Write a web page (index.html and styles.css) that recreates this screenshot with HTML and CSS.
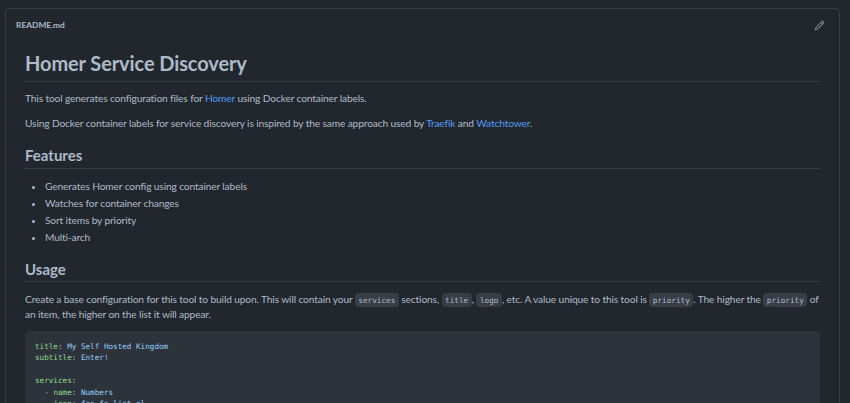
FILE: index.html
```html
<!DOCTYPE html>
<html lang="en">
<head>
<meta charset="utf-8">
<title>README.md</title>
<link rel="stylesheet" href="styles.css">
</head>
<body>
<section class="box">
  <header class="box-header">
    <span class="filename">README.md</span>
    <svg class="edit" viewBox="0 0 16 16" width="11" height="11" aria-hidden="true"><path fill="currentColor" d="M11.013 1.427a1.75 1.75 0 0 1 2.474 0l1.086 1.086a1.75 1.75 0 0 1 0 2.474l-8.61 8.61c-.21.21-.47.364-.756.445l-3.251.93a.75.75 0 0 1-.927-.928l.929-3.25c.081-.286.235-.547.445-.758l8.61-8.61Zm.176 4.823L9.75 4.81l-6.286 6.287a.253.253 0 0 0-.064.108l-.558 1.953 1.953-.558a.253.253 0 0 0 .108-.064Zm1.238-3.763a.25.25 0 0 0-.354 0L10.811 3.75l1.439 1.44 1.263-1.263a.25.25 0 0 0 0-.354Z"/></svg>
  </header>
  <article class="markdown">
    <h1>Homer Service Discovery</h1>
    <p>This tool generates configuration files for <a href="#">Homer</a> using Docker container labels.</p>
    <p>Using Docker container labels for service discovery is inspired by the same approach used by <a href="#">Traefik</a> and <a href="#">Watchtower</a>.</p>
    <h2>Features</h2>
    <ul>
      <li>Generates Homer config using container labels</li>
      <li>Watches for container changes</li>
      <li>Sort items by priority</li>
      <li>Multi-arch</li>
    </ul>
    <h2 class="usage">Usage</h2>
    <p class="intro">Create a base configuration for this tool to build upon. This will contain your <code>services</code> sections, <code>title</code>, <code>logo</code>, etc. A value unique to this tool is <code>priority</code>. The higher the <code>priority</code> of an item, the higher on the list it will appear.</p>
    <pre><span class="k">title</span>: <span class="s">My Self Hosted Kingdom</span>
<span class="k">subtitle</span>: <span class="s">Enter!</span>

<span class="k">services</span>:
  - <span class="k">name</span>: <span class="s">Numbers</span>
    <span class="k">icon</span>: <span class="s">fas fa-list-ol</span></pre>
  </article>
</section>
</body>
</html>
```
FILE: styles.css
```css
html, body {
  margin: 0;
  height: 403px;
  overflow: hidden;
  background: #22272e;
}
body {
  padding: 8px 10px 0 5px;
  box-sizing: border-box;
  color: #adbac7;
  font-family: Lato, Roboto, sans-serif;
  font-size: 10.2px;
  letter-spacing: -0.13px;
  line-height: 15px;
}
.box {
  border: 1px solid #373e47;
  border-radius: 4px;
  height: 500px;
  box-sizing: border-box;
}
.box-header {
  display: flex;
  justify-content: space-between;
  align-items: center;
  height: 32px;
  padding: 0 14px 0 10px;
}
.filename {
  font-size: 8.4px;
  letter-spacing: 0;
  font-weight: 700;
}
.edit {
  color: #768390;
  display: block;
}
.markdown {
  padding: 0 19px 0 19px;
}
h1 {
  margin: 5px 0 9px;
  padding-bottom: 1px;
  border-bottom: 1px solid #373e47;
  font-size: 20px;
  letter-spacing: -0.1px;
  line-height: 34px;
  font-weight: 700;
}
h2 {
  margin: 13.5px 0 9.5px;
  padding-bottom: 3.5px;
  border-bottom: 1px solid #373e47;
  font-size: 15px;
  letter-spacing: 0;
  line-height: 20px;
  font-weight: 700;
}
.usage {
  margin-top: 14px;
  padding-bottom: 2.5px;
}
p {
  margin: 0 0 10px;
}
.intro {
  margin-bottom: 9px;
}
ul {
  margin: 0 0 10px;
  padding-left: 20px;
}
li + li {
  margin-top: 2px;
}
a {
  color: #539bf5;
  text-decoration: none;
}
code {
  font-family: "DejaVu Sans Mono", "Liberation Mono", monospace;
  font-size: 7.7px;
  letter-spacing: 0;
  line-height: 1;
  padding: 2.5px 3.5px;
  border-radius: 4px;
  background: #373e47;
}
pre {
  margin: 0;
  padding: 10px 10px;
  background: #2d333b;
  border-radius: 4px;
  font-family: "DejaVu Sans Mono", "Liberation Mono", monospace;
  font-size: 7.64px;
  letter-spacing: 0;
  line-height: 11.6px;
}
.k { color: #8ddb8c; }
.s { color: #96d0ff; }
```
